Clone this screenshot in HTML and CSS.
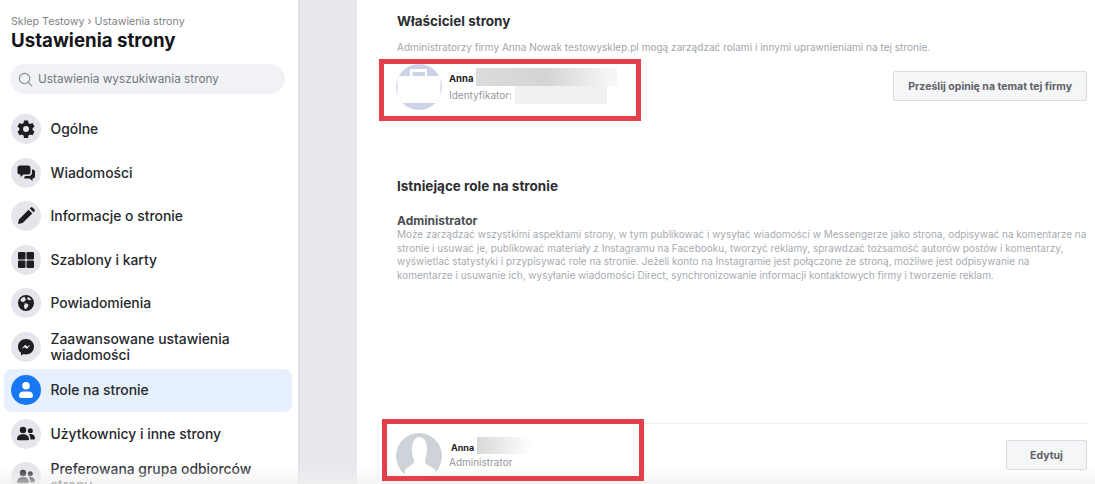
FILE: index.html
```html
<!DOCTYPE html>
<html lang="pl">
<head>
  <meta charset="UTF-8" />
  <title>Ustawienia strony</title>
  <link rel="stylesheet" href="styles.css">
</head>
<body>
  <div class="layout">
    <aside class="sidebar">
      <div class="crumbs">Sklep Testowy › Ustawienia strony</div>
      <h1>Ustawienia strony</h1>
      <div class="search">
        <svg width="15" height="15" viewBox="0 0 16 16" fill="none" stroke="#8a8d94" stroke-width="1.2"><circle cx="7" cy="7" r="5.5"/><path d="M11 11l4 4"/></svg>
        <span>Ustawienia wyszukiwania strony</span>
      </div>
      <nav class="menu">
        <a class="item"><span class="ico"><svg width="20" height="20" viewBox="0 0 20 20"><path fill-rule="evenodd" d="M8 1.500h4l.5 2.500 1.600.9 2.400-.8 2 3.500-1.900 1.700v1.800l1.900 1.700-2 3.500-2.400-.8-1.600.9-.5 2.500H8l-.5-2.500-1.600-.9-2.400.8-2-3.500 1.900-1.700V9.300L1.500 7.600l2-3.500 2.400.8 1.600-.9zM10 7a3 3 0 1 0 0 6 3 3 0 0 0 0-6z"/></svg></span><span>Ogólne</span></a>
        <a class="item"><span class="ico"><svg width="20" height="20" viewBox="0 0 20 20"><path d="M4 2.500h8a2.500 2.500 0 0 1 2.500 2.500v4A2.500 2.500 0 0 1 12 11.500H7.500L4.500 14v-2.500H4A2.500 2.500 0 0 1 1.500 9V5A2.500 2.500 0 0 1 4 2.500z"/><path d="M16 6.500h.500A2.500 2.500 0 0 1 19 9v4a2.500 2.500 0 0 1-2.500 2.500V18l-3-2.500H9.500a2.500 2.500 0 0 1-1.500-.5l1-2h3.500A3.500 3.500 0 0 0 16 9.500z"/></svg></span><span>Wiadomości</span></a>
        <a class="item"><span class="ico"><svg width="20" height="20" viewBox="0 0 20 20"><path d="M2 18l.9-4.600L12.600 3.700l3.700 3.700-9.700 9.700zM13.800 2.500l1-1a1.200 1.200 0 0 1 1.700 0l2 2a1.200 1.200 0 0 1 0 1.700l-1 1z"/></svg></span><span>Informacje o stronie</span></a>
        <a class="item"><span class="ico"><svg width="20" height="20" viewBox="0 0 20 20"><rect x="2" y="2" width="7.500" height="7.500" rx="1.200"/><rect x="10.500" y="2" width="7.500" height="7.500" rx="1.200"/><rect x="2" y="10.500" width="7.500" height="7.500" rx="1.200"/><rect x="10.500" y="10.500" width="7.500" height="7.500" rx="1.200"/></svg></span><span>Szablony i karty</span></a>
        <a class="item"><span class="ico"><svg width="20" height="20" viewBox="0 0 20 20"><path fill-rule="evenodd" d="M10 2a8 8 0 1 1 0 16 8 8 0 0 1 0-16zM8.500 3.800C6.500 4.300 5 5.600 4.200 7.400l1.800 1.400 2 .4.800 2-1 1.500.8 3c.5.200 1 .300 1.500.300l2-2.500.3-2-2.400-1.300-1.800-.2-.6-1.300 1.400-.7 1-1.300zM12 4l-1 1.600 1.500 1.400 2.800.2C14.700 5.700 13.500 4.500 12 4z"/></svg></span><span>Powiadomienia</span></a>
        <a class="item two"><span class="ico"><svg width="20" height="20" viewBox="0 0 20 20"><path fill-rule="evenodd" d="M10 2c4.500 0 8 3.300 8 7.700s-3.500 7.700-8 7.700c-.8 0-1.600-.1-2.300-.3L5 18.500v-2.700C3.200 14.400 2 12.200 2 9.700 2 5.300 5.500 2 10 2zM5.500 12l3.200-1.800 2.200 1.800 3.600-4.200-3.200 1.800-2.200-1.800z"/></svg></span><span>Zaawansowane ustawienia<br>wiadomości</span></a>
        <a class="item active"><span class="ico"><svg width="20" height="20" viewBox="0 0 20 20" fill="#fff"><circle cx="10" cy="5.800" r="3.800"/><path d="M3 15.500c0-2.600 2-4 4.500-4h5c2.500 0 4.500 1.400 4.500 4 0 1.800-1 2.500-2.500 2.500h-9C4 18 3 17.300 3 15.500z"/></svg></span><span>Role na stronie</span></a>
        <a class="item"><span class="ico"><svg width="20" height="20" viewBox="0 0 20 20"><circle cx="7" cy="6" r="3.200"/><circle cx="14.300" cy="6.800" r="2.500"/><path d="M1 15c0-3 2.500-4.800 6-4.800s6 1.800 6 4.800c0 .8-.5 1.200-1.200 1.200H2.200C1.500 16.200 1 15.800 1 15z"/><path d="M13 10.200c3.200-.5 6 1 6 4 0 .8-.4 1.200-1.200 1.200h-3.400c0-2-.3-3.700-1.400-5.200z"/></svg></span><span>Użytkownicy i inne strony</span></a>
        <a class="item two"><span class="ico"><svg width="20" height="20" viewBox="0 0 20 20"><circle cx="7" cy="6" r="3.200"/><circle cx="14.300" cy="6.800" r="2.500"/><path d="M1 15c0-3 2.500-4.800 6-4.800s6 1.800 6 4.800c0 .8-.5 1.200-1.200 1.200H2.200C1.500 16.200 1 15.800 1 15z"/><path d="M13 10.200c3.200-.5 6 1 6 4 0 .8-.4 1.200-1.200 1.200h-3.400c0-2-.3-3.700-1.400-5.200z"/></svg></span><span>Preferowana grupa odbiorców<br>strony</span></a>
      </nav>
    </aside>
    <div class="gutter"></div>
    <main class="content">
      <section class="owner">
        <h2>Właściciel strony</h2>
        <p class="note">Administratorzy firmy Anna Nowak testowysklep.pl mogą zarządzać rolami i innymi uprawnieniami na tej stronie.</p>
        <div class="owner-row">
          <div class="person mark">
            <svg class="avatar" width="46" height="46" viewBox="0 0 46 46"><defs><clipPath id="round"><circle cx="23" cy="23" r="23"/></clipPath></defs><g clip-path="url(#round)"><rect width="46" height="46" fill="#cdd3e6"/><rect x="1.500" y="12" width="43" height="27" fill="#fff"/><rect x="14" y="5" width="17" height="7" fill="#fff"/><rect x="16.500" y="8" width="12.500" height="4" fill="#cdd3e6"/></g></svg>
            <div class="who">
              <div class="name"><b>Anna</b><span class="blur wide"></span></div>
              <div class="sub">Identyfikator:<span class="blur id"></span></div>
            </div>
          </div>
          <button class="btn">Prześlij opinię na temat tej firmy</button>
        </div>
      </section>
      <section class="roles">
        <h2>Istniejące role na stronie</h2>
        <h3>Administrator</h3>
        <p class="desc">Może zarządzać wszystkimi aspektami strony, w tym publikować i wysyłać wiadomości w Messengerze jako strona, odpisywać na komentarze na<br>stronie i usuwać je, publikować materiały z Instagramu na Facebooku, tworzyć reklamy, sprawdzać tożsamość autorów postów i komentarzy,<br>wyświetlać statystyki i przypisywać role na stronie. Jeżeli konto na Instagramie jest połączone ze stroną, możliwe jest odpisywanie na<br>komentarze i usuwanie ich, wysyłanie wiadomości Direct, synchronizowanie informacji kontaktowych firmy i tworzenie reklam.</p>
      </section>
      <section class="admin-row">
        <div class="person mark low">
          <svg class="avatar" width="46" height="46" viewBox="0 0 46 46"><defs><clipPath id="round2"><circle cx="23" cy="23" r="23"/></clipPath></defs><g clip-path="url(#round2)"><rect width="46" height="46" fill="#ced2d9"/><path d="M23.500 4c4.500 0 7.500 5 7.500 12 0 5-1 9-2 11-.5 2 .5 3.500 2 4.500l8 5V46H9v-9.500l7-5c1.500-1 2.500-2.500 2-4.500-1-2-2-6-2-11C16 9 19 4 23.500 4z" fill="#fff"/></g></svg>
          <div class="who">
            <div class="name small"><b>Anna</b><span class="blur short"></span></div>
            <div class="sub">Administrator</div>
          </div>
        </div>
        <button class="btn edit">Edytuj</button>
      </section>
    </main>
  </div>
</body>
</html>
```

FILE: styles.css
```css
* {
  box-sizing: border-box;
}
html, body {
  margin: 0;
  height: 484px;
  overflow: hidden;
}
body {
  font-family: Inter, "Liberation Sans", sans-serif;
  background: #fff;
  color: #1c1e21;
}
.layout {
  position: relative;
  display: flex;
  height: 484px;
}
/* light fade along the bottom of the window */
.layout::after {
  content: "";
  position: absolute;
  left: 0;
  right: 0;
  bottom: 0;
  height: 18px;
  background: linear-gradient(rgba(240, 240, 240, 0), rgba(240, 240, 240, .75));
  pointer-events: none;
}
.sidebar {
  width: 298px;
  flex: none;
  padding: 15px 6px 0 4px;
  overflow: hidden;
}
.crumbs {
  margin-left: 7px;
  font-size: 10.7px;
  line-height: 13px;
  color: #7f8287;
}
h1 {
  margin: 0 0 0 7px;
  font-size: 18.7px;
  line-height: 25px;
  font-weight: 700;
  color: #14161a;
}
.search {
  display: flex;
  align-items: center;
  gap: 5px;
  height: 30px;
  margin: 11px 7px 0 6px;
  padding: 0 8px;
  border-radius: 15px;
  background: #f0f2f5;
  font-size: 11.8px;
  color: #74777d;
}
.menu {
  margin-top: 13.7px;
  display: flex;
  flex-direction: column;
}
.item {
  display: flex;
  align-items: center;
  gap: 10px;
  height: 43.5px;
  padding: 0 6.5px;
  border-radius: 8px;
  font-size: 13.9px;
  line-height: 16px;
  font-weight: 500;
  color: #26282c;
}
.item.active {
  background: #e7f0fd;
}
.ico {
  width: 30px;
  height: 30px;
  flex: none;
  display: flex;
  align-items: center;
  justify-content: center;
  border-radius: 50%;
  background: #e4e6eb;
}
.ico svg {
  fill: #1c1e21;
}
.active .ico {
  background: #1877f2;
}
.active .ico svg {
  fill: #fff;
}
.gutter {
  width: 59px;
  flex: none;
  background: #e8e9ed;
  border-left: 2px solid #e1e2e7;
}
.content {
  flex: 1;
  display: flex;
  flex-direction: column;
  padding: 0 7px 0 40px;
  min-width: 0;
}
h2 {
  margin: 0;
  font-size: 13.5px;
  line-height: 18px;
  font-weight: 700;
  color: #2b2d31;
}
.owner {
  padding-top: 12px;
}
.note {
  margin: 11px 0 0;
  font-size: 10.05px;
  line-height: 12px;
  color: #a3a6ab;
  white-space: nowrap;
}
.owner-row {
  display: flex;
  justify-content: space-between;
  align-items: flex-start;
  margin-top: 11px;
}
.person {
  display: flex;
  align-items: flex-start;
  gap: 7px;
}
.mark {
  position: relative;
  z-index: 1;
  outline: 5px solid #e2404a;
  width: 252px;
  height: 52px;
  margin-left: -13px;
  padding-left: 12px;
}
.low {
  margin-left: -10px;
  padding-left: 9px;
  padding-top: 9px;
  overflow: hidden;
}
.avatar {
  flex: none;
}
.who {
  min-width: 0;
  padding-top: 6px;
}
.name {
  display: flex;
  align-items: center;
  height: 16px;
  font-size: 9.5px;
  color: #222;
}
.name.small {
  margin-left: 2px;
  font-size: 9px;
}
.sub {
  display: flex;
  align-items: center;
  height: 18px;
  font-size: 10px;
  color: #95989d;
}
.low .sub {
  height: 14px;
}
.blur {
  display: block;
  margin-left: 3px;
}
.wide {
  width: 141px;
  height: 18px;
  margin-top: -3px;
  background: linear-gradient(90deg, #dcdcdc, #d4d4d4 50%, #f6f6f6 95%);
}
.id {
  width: 92px;
  height: 18px;
  background: #f1f1f1;
}
.short {
  width: 55px;
  height: 17px;
  margin-top: -3px;
  background: linear-gradient(90deg, #d8d8d8, #fff);
}
.btn {
  font-family: inherit;
  font-size: 10.5px;
  font-weight: 700;
  color: #5e6167;
  background: #f5f6f7;
  border: 1px solid #d8dade;
  border-radius: 2px;
  height: 30px;
  padding: 0 14px;
  margin: 7px 1px 0 0;
}
.roles {
  margin-top: 61px;
}
h3 {
  margin: 19px 0 0;
  font-size: 12px;
  line-height: 14px;
  font-weight: 700;
  color: #4b4e53;
}
.desc {
  margin: 0;
  font-size: 10px;
  line-height: 13.7px;
  color: #a8abb0;
  white-space: nowrap;
}
.admin-row {
  margin-top: auto;
  height: 61px;
  border-top: 1px solid #eeeff1;
  display: flex;
  justify-content: space-between;
  align-items: flex-start;
}
.edit {
  width: 81px;
  padding: 0;
  margin-top: 16px;
}
```
